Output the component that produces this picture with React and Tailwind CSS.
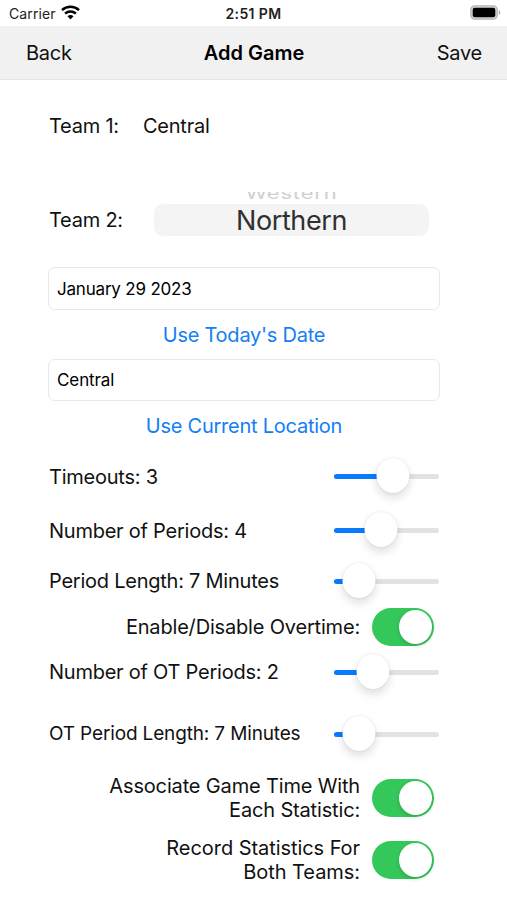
import React from 'react';
import clsx from 'clsx';

const StatusBar = () => (
  <div className="relative flex h-[26px] items-center justify-between bg-white pl-[9px] pr-[6px] text-[14px] text-[#222]">
    <div className="flex items-center gap-[5px]">
      <span className="tracking-[0.1px]">Carrier</span>
      <svg className="mb-[1px]" width="19" height="15" viewBox="0 0 19 15" fill="none" stroke="#000" strokeWidth="2.5">
        <path d="M1 5.2C5.8.7 13.2.7 18 5.2" />
        <path d="M4.1 8.7c3-2.8 7.8-2.8 10.8 0" />
        <path d="M9.5 14.4 6.5 11.2c1.7-1.5 4.3-1.5 6 0z" fill="#000" stroke="none" />
      </svg>
    </div>
    <span className="absolute left-1/2 top-[3px] -translate-x-1/2 whitespace-nowrap font-semibold tracking-[0.4px]">2:51 PM</span>
    <svg className="mb-[1px]" width="31" height="15" viewBox="0 0 31 15">
      <rect x="0.8" y="0.8" width="26.4" height="13.4" rx="4" fill="#d4d4d4" stroke="#b5b5b5" strokeWidth="1.3" />
      <rect x="2.7" y="2.7" width="22.6" height="9.6" rx="2" fill="#000" />
      <path d="M28.8 5.2c2 .8 2 3.8 0 4.6z" fill="#aaa" />
    </svg>
  </div>
);

const Slider = ({ value }) => (
  <div className="relative h-[5px] w-[105px] rounded-full bg-[#e2e2e3]">
    <div className="h-full rounded-full bg-[#0a7aff]" style={{ width: value }} />
    <div
      className="absolute -top-[16px] h-[35px] w-[33px] -translate-x-1/2 rounded-[50%] bg-white shadow-[0_5px_10px_rgba(0,0,0,0.13),0_0_2px_rgba(0,0,0,0.12)]"
      style={{ left: value }}
    />
  </div>
);

const Toggle = () => (
  <div className="flex h-[38px] w-[62px] shrink-0 items-center justify-end rounded-full bg-[#34c759] pr-[2px]">
    <div className="h-[34px] w-[33px] rounded-[50%] bg-white shadow-[0_2px_4px_rgba(0,0,0,0.15)]" />
  </div>
);

const SliderRow = ({ label, value, className, textClass }) => (
  <div className={clsx('flex items-center justify-between pl-[49px] pr-[68px]', className)}>
    <span className={clsx('whitespace-nowrap', textClass)}>{label}</span>
    <Slider value={value} />
  </div>
);

const ToggleRow = ({ lines, className, textClass }) => (
  <div className={clsx('flex items-center justify-end gap-[12px] pr-[73px] text-right', className)}>
    <div className={textClass}>
      {lines.map((line) => (
        <div key={line}>{line}</div>
      ))}
    </div>
    <Toggle />
  </div>
);

const Field = ({ value, className }) => (
  <div className={clsx('ml-[48px] flex w-[392px] items-center rounded-[7px] border border-[#e8e8e8] pl-[8px] pt-[2px] text-[17px] text-black', className)}>
    {value}
  </div>
);

export default function App() {
  return (
    <div className="h-[900px] w-[507px] overflow-hidden bg-white font-[Inter,sans-serif] text-[20px] tracking-[-0.24px] text-[#111]">
      <StatusBar />

      {/* Navigation */}
      <div className="grid h-[54px] grid-cols-3 items-center border-b border-[#e4e6e7] bg-[#f1f1f1] pl-[26px] pr-[25px]">
        <button className="text-left">Back</button>
        <h1 className="text-center font-semibold tracking-[0px] text-black">Add Game</h1>
        <button className="text-right">Save</button>
      </div>

      {/* Teams */}
      <div className="mt-[23px] flex h-[46px] items-center pl-[49px]">
        <span className="w-[94px]">Team 1:</span>
        <span>Central</span>
      </div>
      <div className="mt-[43px] flex h-[44px] items-end pl-[49px]">
        <span className="w-[105px] leading-[32px]">Team 2:</span>
        <div className="w-[275px] text-center">
          {/* Previous wheel item, cut by the picker's top edge */}
          <div className="flex h-[12px] items-end justify-center overflow-hidden text-[22px] leading-[12px] tracking-[0.8px] text-[#cfcfcf]">
            <span className="-translate-y-[5px] scale-y-75">Western</span>
          </div>
          <div className="h-[32px] rounded-[9px] bg-[#f4f4f4] text-[27px] leading-[33px] tracking-[-0.4px] text-[#303030]">Northern</div>
        </div>
      </div>

      {/* Date and location */}
      <Field value="January 29 2023" className="mt-[31px] h-[43px] tracking-[-0.2px]" />
      <button className="ml-[48px] block h-[49px] w-[392px] pt-[1px] text-[#147ef5]">Use Today's Date</button>
      <Field value="Central" className="h-[42px] tracking-[-0.1px]" />
      <button className="ml-[48px] block h-[50px] w-[392px] text-[#147ef5]">Use Current Location</button>

      {/* Game settings */}
      <SliderRow label="Timeouts: 3" value="59px" className="h-[51px]" />
      <SliderRow label="Number of Periods: 4" value="47px" className="h-[56px]" textClass="pt-[2px]" />
      <SliderRow label="Period Length: 7 Minutes" value="25px" className="h-[46px]" />
      <ToggleRow lines={['Enable/Disable Overtime:']} className="h-[45px]" textClass="tracking-[-0.18px]" />
      <SliderRow label="Number of OT Periods: 2" value="39px" className="h-[46px]" />
      <SliderRow label="OT Period Length: 7 Minutes" value="25px" className="mt-[16px] h-[46px]" textClass="text-[19px] tracking-[-0.15px]" />
      <ToggleRow lines={['Associate Game Time With', 'Each Statistic:']} className="mt-[11px] h-[60px]" textClass="leading-[24.5px] tracking-[-0.16px]" />
      <ToggleRow lines={['Record Statistics For', 'Both Teams:']} className="mt-[2px] h-[60px]" textClass="leading-[24.5px] tracking-[-0.06px]" />
    </div>
  );
}
